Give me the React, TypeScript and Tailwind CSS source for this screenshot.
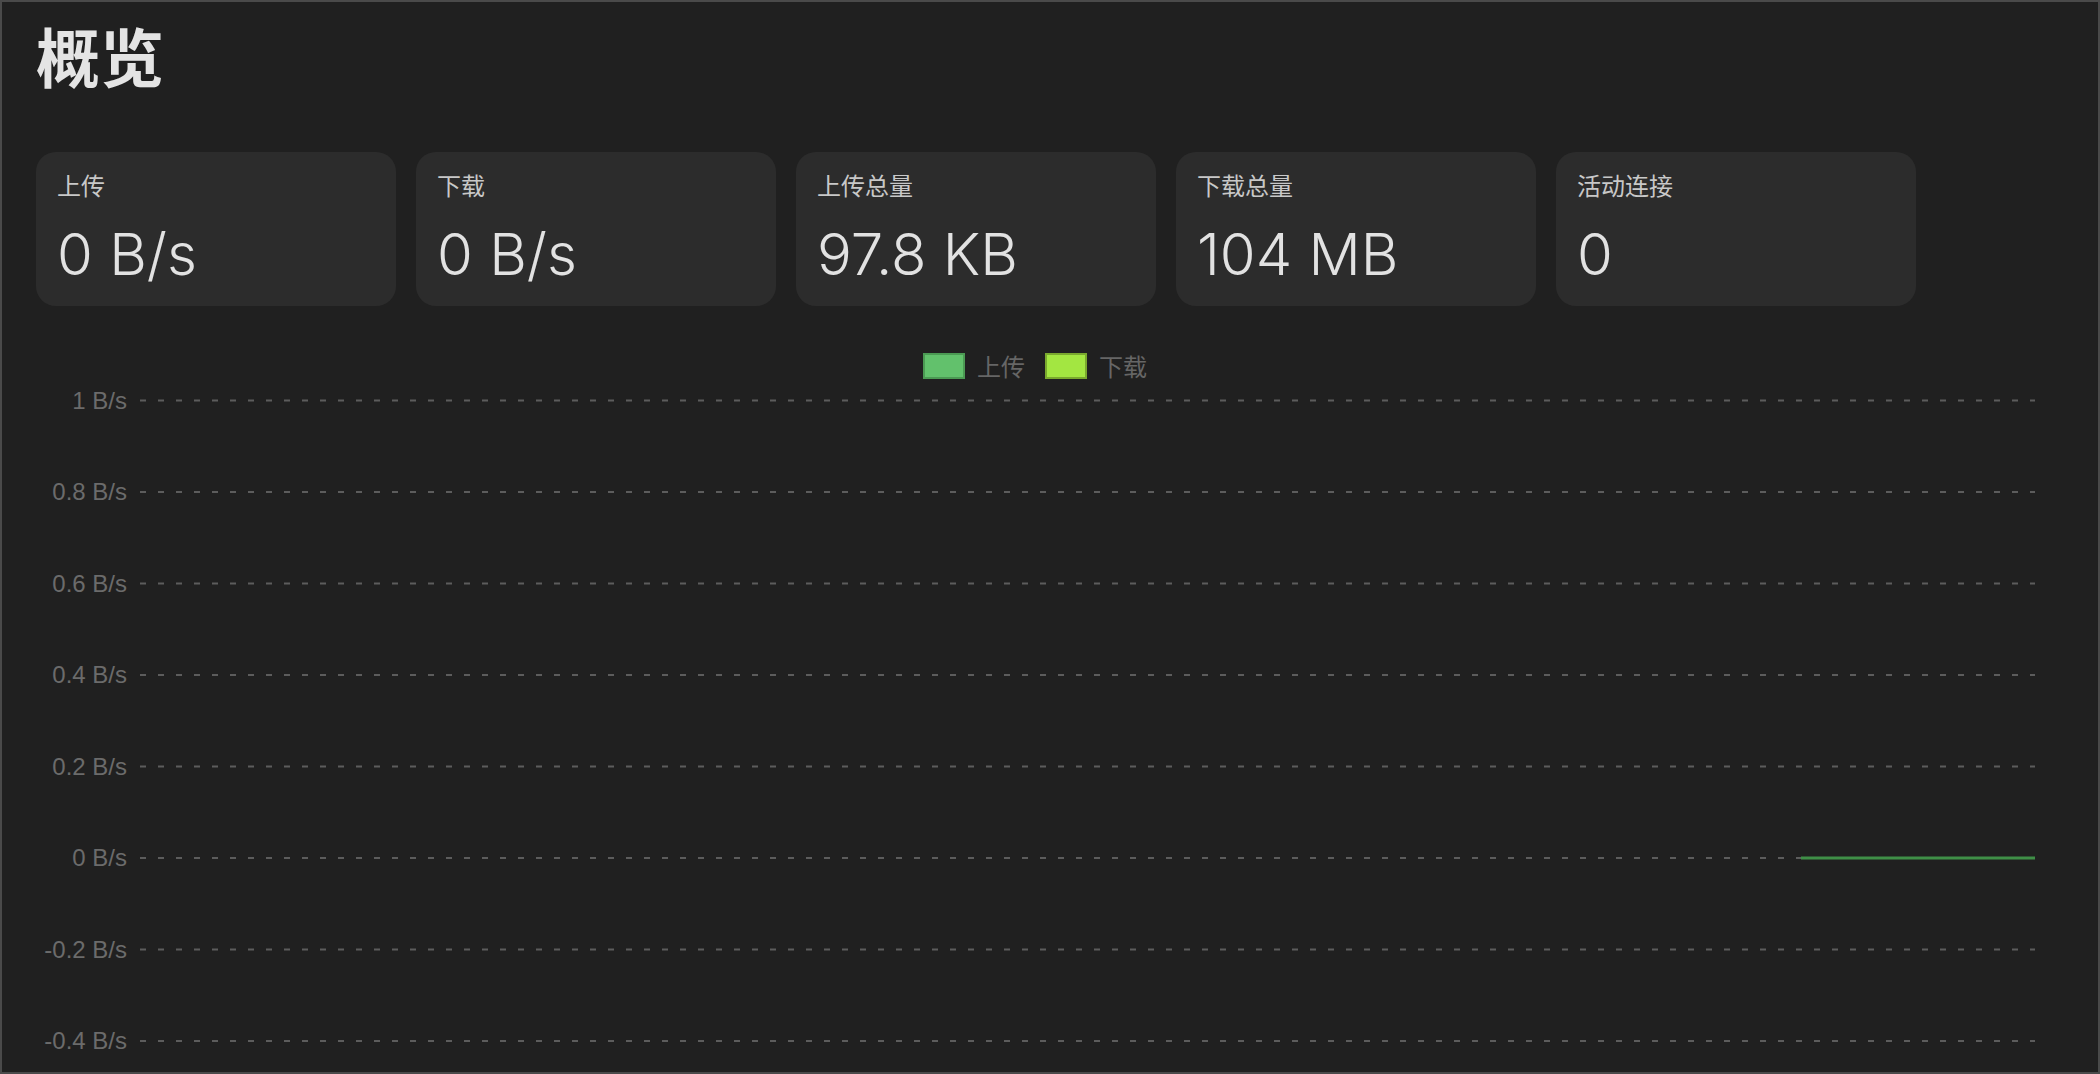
import React from "react";

const cjk = '"Noto Sans CJK SC", "Noto Sans", sans-serif';

const stats = [
  { label: "上传", value: "0 B/s" },
  { label: "下载", value: "0 B/s" },
  { label: "上传总量", value: "97.8 KB" },
  { label: "下载总量", value: "104 MB" },
  { label: "活动连接", value: "0" },
];

const ticks = ["1 B/s", "0.8 B/s", "0.6 B/s", "0.4 B/s", "0.2 B/s", "0 B/s", "-0.2 B/s", "-0.4 B/s"];

function StatCard({ label, value }: { label: string; value: string }) {
  return (
    <div className="flex h-[154px] w-[360px] flex-col rounded-[20px] bg-[#2c2c2c] px-[21px] pt-[21px]">
      <div className="text-[24px] leading-none text-[#c8c8c8]" style={{ fontFamily: cjk }}>
        {label}
      </div>
      <div
        className="mt-[28px] text-[58px] font-light leading-none text-[#e2e2e2]"
        style={{ fontFamily: 'Inter, "Noto Sans", sans-serif' }}
      >
        {value}
      </div>
    </div>
  );
}

function TrafficChart() {
  // gridlines every 91.5px
  const top = 12.5;
  const left = 138;
  const right = 2033;
  const zeroY = top + 5 * 91.5;
  return (
    <svg width={2096} height={682} className="block">
      {ticks.map((t, i) => {
        const y = top + i * 91.5;
        return (
          <g key={t}>
            <line x1={left} x2={right} y1={y} y2={y} stroke="#5c5c5c" strokeWidth={2} strokeDasharray="6 12" />
            <text
              x={125}
              y={y + 8}
              textAnchor="end"
              fill="#6b6b6b"
              fontSize={24}
              fontFamily='"Liberation Sans", Arial, sans-serif'
            >
              {t}
            </text>
          </g>
        );
      })}
      {/* upload series: flat at zero for the most recent samples */}
      <line x1={1799} x2={right} y1={zeroY} y2={zeroY} stroke="#3f8f47" strokeWidth={3} />
    </svg>
  );
}

export default function App() {
  return (
    <div className="box-border h-[1074px] w-[2100px] overflow-hidden border-2 border-[#4a4a4a] bg-[#202020]">
      <h1
        className="ml-[34px] mt-[20px] h-[64px] text-[64px] font-bold leading-none text-[#e4e4e4]"
        style={{ fontFamily: cjk }}
      >
        概览
      </h1>

      <div className="ml-[34px] mt-[66px] flex gap-5">
        {stats.map((s) => (
          <StatCard key={s.label} label={s.label} value={s.value} />
        ))}
      </div>

      {/* legend */}
      <div className="mt-[47px] flex h-[26px] items-center justify-center gap-3 pr-[30px]" style={{ fontFamily: cjk }}>
        <div className="flex items-center gap-3">
          <span className="box-border h-[26px] w-[42px] border-2 border-[#4b9a53] bg-[#62c16c]" />
          <span className="text-[24px] leading-none text-[#666666]">上传</span>
        </div>
        <div className="ml-[8px] flex items-center gap-3">
          <span className="box-border h-[26px] w-[42px] border-2 border-[#7aa92e] bg-[#a3e641]" />
          <span className="text-[24px] leading-none text-[#666666]">下载</span>
        </div>
      </div>

      <div className="mt-[9px]">
        <TrafficChart />
      </div>
    </div>
  );
}
